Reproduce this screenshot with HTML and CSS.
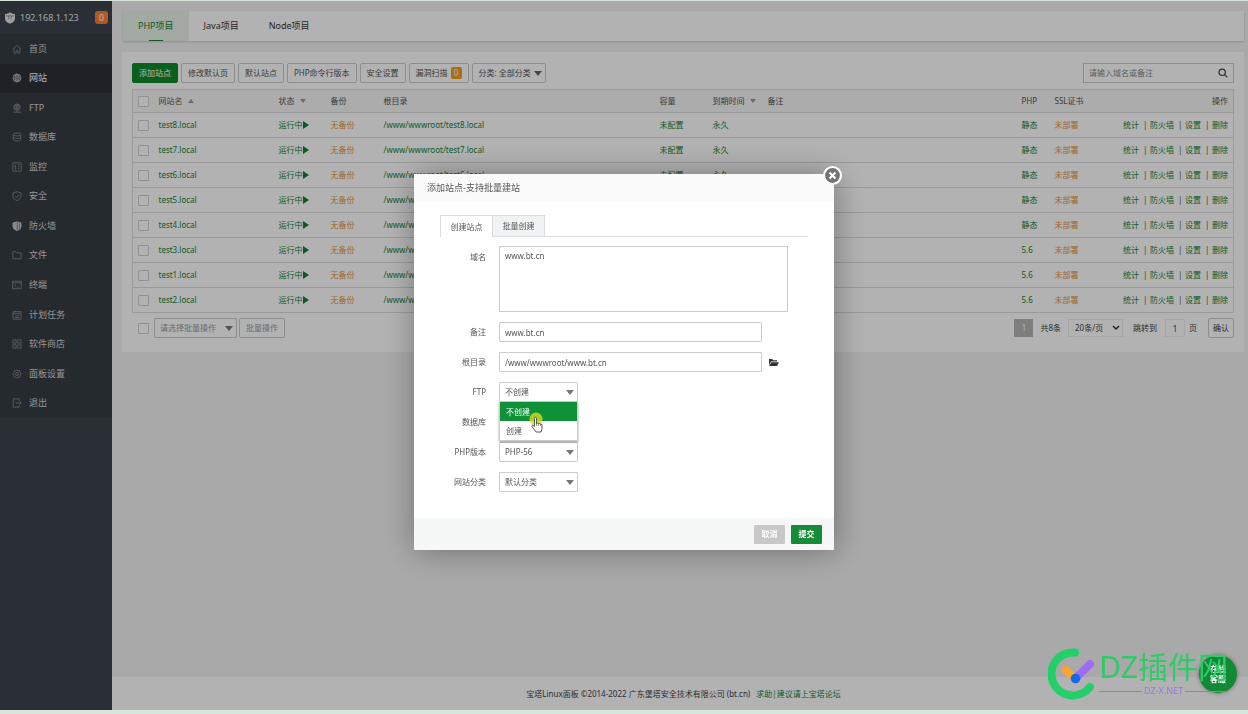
FILE: index.html
```html
<!DOCTYPE html>
<html lang="zh-CN">
<head>
<meta charset="utf-8">
<title>宝塔Linux面板</title>
<link rel="stylesheet" href="styles.css">
</head>
<body>
<div class="app">
  <aside class="sidebar">
    <div class="host">
      <svg class="host-icon" viewBox="0 0 12 14"><path d="M6 0l1.600 1.400L12 2.600v5C12 10.600 9.500 12.600 6 14 2.500 12.600 0 10.600 0 7.600v-5l4.400-1.200z" fill="#e4e4e4"/><path d="M1 4.500h10M4.300 4.500l.4 4M7.700 4.500l-.4 4" stroke="#70777d" stroke-width=".8" fill="none"/></svg>
      <span class="host-ip">192.168.1.123</span>
      <span class="host-badge">0</span>
    </div>
    <ul class="menu">
      <li><a href="#"><svg viewBox="0 0 12 12"><path d="M1 6l5-4.500L11 6M2.500 5v6h2.500V8h2v3h2.500V5"/></svg>首页</a></li>
      <li class="active"><a href="#"><svg viewBox="0 0 12 12"><circle cx="6" cy="6" r="4.800"/><path d="M1.200 6h9.600M6 1.200v9.600M2 3.500h8M2 8.500h8"/><ellipse cx="6" cy="6" rx="2.300" ry="4.800"/></svg>网站</a></li>
      <li><a href="#"><svg viewBox="0 0 12 12"><circle cx="6" cy="5" r="3.800"/><path d="M2.200 5h7.600M3 3h6M3 7h6M1 11h10M6 1.200v9.800"/></svg>FTP</a></li>
      <li><a href="#"><svg viewBox="0 0 12 12"><ellipse cx="6" cy="3" rx="4.500" ry="1.800"/><path d="M1.500 3v6c0 2.400 9 2.400 9 0V3M1.500 6c0 2.400 9 2.400 9 0"/></svg>数据库</a></li>
      <li><a href="#"><svg viewBox="0 0 12 12"><path d="M1 1h10v10H1zM4 3v7M7 5h2M7 7.500h2M7 3h2"/></svg>监控</a></li>
      <li><a href="#"><svg viewBox="0 0 12 12"><path d="M6 .8l4.800 1.500v4C10.800 9 8.500 10.500 6 11.500 3.500 10.500 1.200 9 1.200 6.300v-4zM3.800 5.800l1.700 1.800L8.500 4.500"/></svg>安全</a></li>
      <li><a href="#"><svg viewBox="0 0 12 12"><path class="solid" d="M6 .3l5.300 1.700v4.500C11.300 9.300 8.800 11 6 12 3.200 11 .7 9.300 .7 6.500V2z"/><path class="cut" d="M6.300 1v10M8.800 2v7.500"/></svg>防火墙</a></li>
      <li><a href="#"><svg viewBox="0 0 12 12"><path d="M1 2h3.500l1 1.500H11V10.500H1z"/></svg>文件</a></li>
      <li><a href="#"><svg viewBox="0 0 12 12"><path d="M.8 1.500h10.400v9H.8zM.8 3.500h10.400M3 5.500l1.500 1.200L3 8M6 8.500h2.500"/></svg>终端</a></li>
      <li><a href="#"><svg viewBox="0 0 12 12"><path d="M1.200 2h9.600v9H1.200zM1.200 4.500h9.600M3.500 1v2M8.500 1v2M3.500 7h5M3.500 9h5"/></svg>计划任务</a></li>
      <li><a href="#"><svg viewBox="0 0 12 12"><path d="M1 1h4v4H1zM7 1h4v4H7zM1 7h4v4H1zM7 7h4v4H7z"/></svg>软件商店</a></li>
      <li><a href="#"><svg viewBox="0 0 12 12"><path d="M6 1l1.300 1.200 1.800-.2.400 1.800L11 6 9.500 8.200 9 10l-1.700-.2L6 11 4.700 9.800 3 10l-.5-1.800L1 6l1.500-2.200L3 2l1.700.2z"/><circle cx="6" cy="6" r="1.800"/></svg>面板设置</a></li>
      <li><a href="#"><svg viewBox="0 0 12 12"><path d="M8.500 3.500V1H1.500v10h7V8.500M4.500 6h6.500M9 4l2 2-2 2"/></svg>退出</a></li>
    </ul>
  </aside>

  <main class="content">
    <nav class="tabs">
      <a class="tab active" href="#">PHP项目</a>
      <a class="tab" href="#">Java项目</a>
      <a class="tab" href="#">Node项目</a>
    </nav>

    <section class="panel">
      <div class="toolbar">
        <button class="btn primary">添加站点</button>
        <button class="btn">修改默认页</button>
        <button class="btn">默认站点</button>
        <button class="btn">PHP命令行版本</button>
        <button class="btn">安全设置</button>
        <button class="btn">漏洞扫描<span class="count">0</span></button>
        <button class="btn filter">分类: 全部分类<span class="caret"></span></button>
        <div class="search">
          <input type="text" aria-label="搜索" placeholder="请输入域名或备注">
          <svg viewBox="0 0 12 12"><circle cx="5" cy="5" r="3.800"/><path d="M7.600 7.600l3.600 3.600"/></svg>
        </div>
      </div>

      <table class="sites">
        <colgroup><col class="c-check"><col class="c-name"><col class="c-state"><col class="c-backup"><col class="c-root"><col class="c-size"><col class="c-expire"><col><col class="c-php"><col class="c-ssl"><col class="c-actions"></colgroup>
        <thead>
          <tr><th><input type="checkbox" aria-label="全选"></th><th>网站名<span class="sort up"></span></th><th>状态<span class="sort"></span></th><th>备份</th><th>根目录</th><th>容量</th><th>到期时间<span class="sort"></span></th><th>备注</th><th>PHP</th><th>SSL证书</th><th>操作</th></tr>
        </thead>
        <tbody>
          <tr><td><input type="checkbox" aria-label="test8.local"></td><td><a href="#">test8.local</a></td><td><a href="#">运行中<span class="play"></span></a></td><td><a class="warn" href="#">无备份</a></td><td><a href="#">/www/wwwroot/test8.local</a></td><td><a href="#">未配置</a></td><td><a href="#">永久</a></td><td></td><td><a href="#">静态</a></td><td><a class="warn" href="#">未部署</a></td><td><div class="ops"><a href="#">统计</a><i>|</i><a href="#">防火墙</a><i>|</i><a href="#">设置</a><i>|</i><a href="#">删除</a></div></td></tr>
          <tr><td><input type="checkbox" aria-label="test7.local"></td><td><a href="#">test7.local</a></td><td><a href="#">运行中<span class="play"></span></a></td><td><a class="warn" href="#">无备份</a></td><td><a href="#">/www/wwwroot/test7.local</a></td><td><a href="#">未配置</a></td><td><a href="#">永久</a></td><td></td><td><a href="#">静态</a></td><td><a class="warn" href="#">未部署</a></td><td><div class="ops"><a href="#">统计</a><i>|</i><a href="#">防火墙</a><i>|</i><a href="#">设置</a><i>|</i><a href="#">删除</a></div></td></tr>
          <tr><td><input type="checkbox" aria-label="test6.local"></td><td><a href="#">test6.local</a></td><td><a href="#">运行中<span class="play"></span></a></td><td><a class="warn" href="#">无备份</a></td><td><a href="#">/www/wwwroot/test6.local</a></td><td><a href="#">未配置</a></td><td><a href="#">永久</a></td><td></td><td><a href="#">静态</a></td><td><a class="warn" href="#">未部署</a></td><td><div class="ops"><a href="#">统计</a><i>|</i><a href="#">防火墙</a><i>|</i><a href="#">设置</a><i>|</i><a href="#">删除</a></div></td></tr>
          <tr><td><input type="checkbox" aria-label="test5.local"></td><td><a href="#">test5.local</a></td><td><a href="#">运行中<span class="play"></span></a></td><td><a class="warn" href="#">无备份</a></td><td><a href="#">/www/wwwroot/test5.local</a></td><td><a href="#">未配置</a></td><td><a href="#">永久</a></td><td></td><td><a href="#">静态</a></td><td><a class="warn" href="#">未部署</a></td><td><div class="ops"><a href="#">统计</a><i>|</i><a href="#">防火墙</a><i>|</i><a href="#">设置</a><i>|</i><a href="#">删除</a></div></td></tr>
          <tr><td><input type="checkbox" aria-label="test4.local"></td><td><a href="#">test4.local</a></td><td><a href="#">运行中<span class="play"></span></a></td><td><a class="warn" href="#">无备份</a></td><td><a href="#">/www/wwwroot/test4.local</a></td><td><a href="#">未配置</a></td><td><a href="#">永久</a></td><td></td><td><a href="#">静态</a></td><td><a class="warn" href="#">未部署</a></td><td><div class="ops"><a href="#">统计</a><i>|</i><a href="#">防火墙</a><i>|</i><a href="#">设置</a><i>|</i><a href="#">删除</a></div></td></tr>
          <tr><td><input type="checkbox" aria-label="test3.local"></td><td><a href="#">test3.local</a></td><td><a href="#">运行中<span class="play"></span></a></td><td><a class="warn" href="#">无备份</a></td><td><a href="#">/www/wwwroot/test3.local</a></td><td><a href="#">未配置</a></td><td><a href="#">永久</a></td><td></td><td><a href="#">5.6</a></td><td><a class="warn" href="#">未部署</a></td><td><div class="ops"><a href="#">统计</a><i>|</i><a href="#">防火墙</a><i>|</i><a href="#">设置</a><i>|</i><a href="#">删除</a></div></td></tr>
          <tr><td><input type="checkbox" aria-label="test1.local"></td><td><a href="#">test1.local</a></td><td><a href="#">运行中<span class="play"></span></a></td><td><a class="warn" href="#">无备份</a></td><td><a href="#">/www/wwwroot/test1.local</a></td><td><a href="#">未配置</a></td><td><a href="#">永久</a></td><td></td><td><a href="#">5.6</a></td><td><a class="warn" href="#">未部署</a></td><td><div class="ops"><a href="#">统计</a><i>|</i><a href="#">防火墙</a><i>|</i><a href="#">设置</a><i>|</i><a href="#">删除</a></div></td></tr>
          <tr><td><input type="checkbox" aria-label="test2.local"></td><td><a href="#">test2.local</a></td><td><a href="#">运行中<span class="play"></span></a></td><td><a class="warn" href="#">无备份</a></td><td><a href="#">/www/wwwroot/test2.local</a></td><td><a href="#">未配置</a></td><td><a href="#">永久</a></td><td></td><td><a href="#">5.6</a></td><td><a class="warn" href="#">未部署</a></td><td><div class="ops"><a href="#">统计</a><i>|</i><a href="#">防火墙</a><i>|</i><a href="#">设置</a><i>|</i><a href="#">删除</a></div></td></tr>
        </tbody>
      </table>

      <div class="table-foot">
        <input type="checkbox" aria-label="选择全部站点">
        <div class="pick batch-pick"><select aria-label="批量操作"><option>请选择批量操作</option></select></div>
        <button class="btn muted">批量操作</button>
        <div class="pager">
          <span class="page-now">1</span>
          <span class="page-total">共8条</span>
          <div class="page-size"><select aria-label="每页条数"><option>20条/页</option></select><svg viewBox="0 0 8 6"><path d="M1 1l3 3 3-3"/></svg></div>
          <label for="jump">跳转到</label>
          <input id="jump" class="jump" type="text" value="1">
          <span class="page-unit">页</span>
          <button class="btn go">确认</button>
        </div>
      </div>
    </section>

    <footer class="footer"><span>宝塔Linux面板 ©2014-2022 广东堡塔安全技术有限公司 (bt.cn)</span><a href="#">求助|建议请上宝塔论坛</a></footer>
  </main>
</div>

<div class="overlay">
  <div class="modal" role="dialog" aria-labelledby="modal-title">
    <button class="close" aria-label="关闭"><svg viewBox="0 0 18 18"><circle cx="9" cy="9" r="8" fill="#737373" stroke="#fff" stroke-width="2"/><path d="M6.200 6.200l5.600 5.600M11.800 6.200l-5.600 5.600" stroke="#fff" stroke-width="2"/></svg></button>
    <h1 id="modal-title" class="modal-title">添加站点-支持批量建站</h1>
    <div class="modal-body">
      <div class="modal-tabs"><button class="modal-tab on">创建站点</button><button class="modal-tab">批量创建</button></div>
      <form id="site-form" class="form">
        <div class="field tall"><label for="domain">域名</label><textarea id="domain">www.bt.cn</textarea></div>
        <div class="field"><label for="note">备注</label><input id="note" class="text" type="text" value="www.bt.cn"></div>
        <div class="field"><label for="root">根目录</label><input id="root" class="text" type="text" value="/www/wwwroot/www.bt.cn"><svg class="folder" viewBox="0 0 12 10"><path d="M1 8V1.200h3.500l1 1.200H10V4H3.200z" fill="#333"/><path d="M3.600 4.700H12L10 9H1.200z" fill="#333"/></svg></div>
        <div class="field"><label for="ftp">FTP</label>
          <div class="pick"><select id="ftp"><option>不创建</option><option>创建</option></select>
            <div class="options" role="listbox" aria-label="FTP"><div class="option chosen" role="option" aria-selected="true">不创建</div><div class="option" role="option" aria-selected="false">创建</div>
              <svg class="pointer" viewBox="0 0 15 24"><circle cx="7" cy="8" r="6.500" fill="#d6dc1e" opacity=".8"/><path d="M5.500 7.500q0-1.200 1-1.200t1 1.200v5l1.200-.5 1 .6 1.100-.2.900.8 1.300.3v4.500L12 21H7L3 15.500q-.5-1.200.6-1.400L5.500 15.500z" fill="#fff" stroke="#333" stroke-width=".8"/><path d="M7.500 12v3M9.600 12.500V15M11.500 13v2" stroke="#333" stroke-width=".5"/></svg>
            </div>
          </div>
        </div>
        <div class="field"><label for="db">数据库</label><div class="pick"><select id="db"><option>不创建</option></select></div></div>
        <div class="field"><label for="php">PHP版本</label><div class="pick"><select id="php"><option>PHP-56</option></select></div></div>
        <div class="field"><label for="cat">网站分类</label><div class="pick"><select id="cat"><option>默认分类</option></select></div></div>
      </form>
    </div>
    <div class="modal-foot"><button class="action cancel">取消</button><button class="action submit" form="site-form">提交</button></div>
  </div>
</div>

<button class="service"><span>在线</span><span>客服</span></button>
<div class="brand">
  <svg class="brand-mark" viewBox="0 0 48 52"><path d="M27 4.500A21.500 21.500 0 1 0 42 39" fill="none" stroke="#22cf68" stroke-width="8" stroke-linecap="round"/><path d="M18 22l6 6" stroke="#ffa52e" stroke-width="8" stroke-linecap="round"/><path d="M28 30L42 16" stroke="#9b6cf5" stroke-width="8" stroke-linecap="round"/><circle cx="27.500" cy="30.500" r="4.800" fill="#0b6ee8"/></svg>
  <div class="brand-words"><div class="brand-name">DZ插件网</div><div class="brand-site">DZ-X.NET</div></div>
</div>
</body>
</html>
```
FILE: styles.css
```css
* { box-sizing: border-box; }

body {
  margin: 0;
  padding: 1px 0 4px;
  height: 100vh;
  overflow: hidden;
  background: #d8e6dc;
  color: #555;
  font: 8px/12px "Noto Sans", "Noto Sans CJK SC", sans-serif;
}

a { color: #157f35; text-decoration: none; }
button, input, select, textarea { font: inherit; color: inherit; margin: 0; }
button { cursor: pointer; }
svg { display: block; flex: none; }

.app { display: grid; grid-template-columns: 112px 1fr; height: 100%; background: #f2f2f2; }

/* Sidebar */
.sidebar { background: #3c444d; color: #e4e4e4; }
.host { display: flex; align-items: center; height: 33px; padding: 0 4px 0 5px; font-size: 9px; }
.host-icon { width: 10px; height: 12px; margin-right: 5px; }
.host-ip { flex: 1; white-space: nowrap; }
.host-badge { width: 13px; height: 13px; border-radius: 3px; background: #ff8033; color: #fff; text-align: center; line-height: 13px; }
.menu { display: flex; flex-direction: column; height: 384px; margin: 0; padding: 0; list-style: none; background: #353d44; }
.menu li { flex: 1; display: flex; }
.menu a { flex: 1; display: flex; align-items: center; gap: 7px; padding-left: 12px; color: #d5d5d5; font-size: 9px; }
.menu .active { background: #2c3138; }
.menu .active a { color: #fff; }
.menu svg { width: 10px; height: 10px; fill: none; stroke: #858b90; stroke-width: 1; }
.menu .active svg { stroke: #b5b8bb; }
.menu .solid { fill: #c5c8ca; stroke: none; }
.menu .cut { stroke: #70777d; }

/* Content */
.content { display: flex; flex-direction: column; min-width: 0; padding-top: 10px; }
.tabs { display: flex; height: 30px; margin: 0 4px 11px 11px; background: #fff; box-shadow: 0 1px 2px #ccc; }
.tab { position: relative; padding: 0 15px; color: #333; font-size: 9px; line-height: 30px; }
.tab.active { background: #e8f3e9; color: #157f35; }
.tab.active::after { content: ""; position: absolute; left: 50%; bottom: 0; width: 14px; margin-left: -7px; border-bottom: 1px solid #157f35; }
.panel { margin: 0 4px 0 10px; padding: 11px 10px 14px; background: #fff; }
.toolbar { display: flex; gap: 3px; margin-bottom: 6px; }
.btn { display: flex; align-items: center; height: 20px; padding: 0 6px; border: 1px solid #ccc; border-radius: 2px; background: #fff; white-space: nowrap; }
.btn.primary { border-color: #0e8a2c; background: #0e8a2c; color: #fff; }
.btn.filter { padding-right: 3px; }
.count { width: 11px; height: 12px; margin-left: 3px; border-radius: 2px; background: #f0a020; color: #fff; text-align: center; }
.caret { margin-left: 3px; border: 4px solid transparent; border-top: 5px solid #666; border-bottom: 0; }
.search { display: flex; align-items: center; width: 151px; height: 20px; margin-left: auto; padding: 0 5px; border: 1px solid #ccc; }
.search input { flex: 1; min-width: 0; padding: 0; border: 0; outline: 0; background: none; }
.search input::placeholder { color: #888; }
.search svg { width: 10px; height: 10px; fill: none; stroke: #444; stroke-width: 1.5; }

input[type="checkbox"] { appearance: none; display: block; width: 11px; height: 11px; border: 1px solid #d0d0d0; border-radius: 1px; background: #fff; }

.sites { width: 100%; table-layout: fixed; border-collapse: collapse; border: 1px solid #ddd; }
.c-check { width: 21px; }
.c-name { width: 120px; }
.c-state { width: 52px; }
.c-backup { width: 53px; }
.c-root { width: 276px; }
.c-size { width: 53px; }
.c-expire { width: 55px; }
.c-php { width: 33px; }
.c-ssl { width: 51px; }
.c-actions { width: 133px; }
.sites th, .sites td { padding: 0 0 0 5px; white-space: nowrap; }
.sites th { height: 23px; background: #f6f6f6; font-weight: 400; text-align: left; }
.sites td { height: 25px; border-top: 1px solid #ddd; }
.sites th:last-child { padding-right: 5px; text-align: right; }
.sites td:last-child { padding-right: 5px; }
.sites .warn { color: #e8963a; }
.sort { display: inline-block; margin-left: 5px; border: 3px solid transparent; border-top: 4px solid #999; border-bottom: 0; vertical-align: 1px; }
.sort.up { border-top: 0; border-bottom: 4px solid #999; }
.play { display: inline-block; border: 4px solid transparent; border-left: 6px solid #157f35; border-right: 0; vertical-align: -1px; }
.ops { display: flex; justify-content: flex-end; gap: 4px; }
.ops i { width: 3px; font-style: normal; text-align: center; }

.table-foot { display: flex; align-items: center; margin-top: 5px; padding-left: 6px; }
.pick { position: relative; width: 79px; height: 20px; }
.pick::after { content: ""; position: absolute; top: 8px; right: 4px; border: 4px solid transparent; border-top: 5px solid #777; border-bottom: 0; pointer-events: none; }
.pick select { appearance: none; display: block; width: 100%; height: 100%; padding: 0 5px; border: 1px solid #ccc; border-radius: 1px; outline: 0; background: #fff; }
.batch-pick { width: 83px; margin: 0 2px 0 5px; color: #999; }
.btn.muted { color: #999; }
.pager { display: flex; align-items: center; margin-left: auto; color: #444; }
.page-now { width: 19px; height: 18px; background: #b5b5b5; color: #fff; line-height: 18px; text-align: center; }
.page-total { padding: 0 7px; }
.page-size { position: relative; width: 55px; margin-right: 10px; }
.page-size select { appearance: none; display: block; width: 100%; height: 18px; padding: 0 6px; border: 1px solid #eee; background: none; }
.page-size svg { position: absolute; top: 6px; right: 3px; width: 8px; height: 6px; fill: none; stroke: #333; stroke-width: 1.5; }
.jump { width: 20px; height: 18px; margin: 0 4px 0 8px; padding: 0; border: 1px solid #eee; text-align: center; }
.page-unit { margin-right: 11px; }
.btn.go { padding: 0 4px; }
.footer { display: flex; align-items: center; justify-content: center; gap: 6px; height: 33px; margin-top: auto; padding-left: 7px; background: #fff; color: #444; }

/* Dialog */
.overlay { position: fixed; inset: 1px 0 4px; display: flex; align-items: center; justify-content: center; padding-top: 13px; background: rgba(0, 0, 0, .3); }
.modal { position: relative; width: 420px; background: #fff; box-shadow: 1px 1px 30px rgba(0, 0, 0, .35); }
.close { position: absolute; top: -8px; right: -8px; width: 19px; height: 19px; padding: 0; border: 0; background: none; }
.modal-title { margin: 0; padding: 0 13px; background: #fafafa; font-size: 9px; font-weight: 400; line-height: 28px; }
.modal-body { padding: 13px 26px 26px; }
.modal-tabs { display: flex; border-bottom: 1px solid #ddd; }
.modal-tab { width: 52px; height: 21px; padding: 0; border: 1px solid #ddd; border-width: 1px 1px 0 0; background: #f0f3f3; }
.modal-tab.on { width: 53px; height: 22px; margin-bottom: -1px; border-left-width: 1px; background: #fff; }
.form { display: flex; flex-direction: column; gap: 10px; padding-top: 9px; }
.field { display: flex; align-items: center; }
.field > label { width: 46px; margin-right: 13px; text-align: right; white-space: nowrap; }
.field.tall { align-items: flex-start; }
.field.tall > label { padding-top: 5px; }
.field textarea { width: 289px; height: 66px; padding: 3px 5px; border: 1px solid #ccc; outline: 0; resize: none; }
.text { width: 263px; height: 20px; padding: 0 5px; border: 1px solid #ccc; border-radius: 1px; outline: 0; }
.folder { width: 11px; height: 9px; margin-left: 6px; }
.options { position: absolute; z-index: 2; top: 20px; left: 0; width: 79px; border: 1px solid #ccc; border-top: 0; background: #fff; box-shadow: 0 1px 2px rgba(0, 0, 0, .4); }
.option { padding: 0 6px; line-height: 19px; }
.option.chosen { background: #0f9138; color: #fff; }
.pointer { position: absolute; top: 9px; left: 29px; width: 15px; height: 24px; }
.modal-foot { display: flex; align-items: center; justify-content: flex-end; gap: 6px; height: 32px; padding-right: 12px; background: #f6f8f8; }
.action { width: 31px; height: 19px; padding: 0; border: 0; border-radius: 1px; color: #fff; font-weight: 700; }
.cancel { background: #c8c8c8; }
.submit { background: #158c38; }

/* Floating corner */
.service { position: fixed; right: 11px; bottom: 21px; display: flex; flex-direction: column; align-items: center; justify-content: center; width: 38px; height: 38px; padding: 0; border: 0; border-radius: 50%; background: #128a35; box-shadow: 0 0 4px rgba(0, 0, 0, .4); color: #fff; font-weight: 700; line-height: 10px; }
.brand { position: fixed; right: 20px; bottom: 14px; display: flex; align-items: flex-start; gap: 3px; pointer-events: none; }
.brand-mark { width: 48px; height: 52px; }
.brand-name { color: #2fcb69; font-size: 30px; font-weight: 400; line-height: 38px; white-space: nowrap; }
.brand-site { display: flex; align-items: center; gap: 2px; color: #9479d8; font-size: 9px; line-height: 10px; }
.brand-site::before, .brand-site::after { content: ""; flex: 1; border-top: 1px solid #9479d8; }
```
